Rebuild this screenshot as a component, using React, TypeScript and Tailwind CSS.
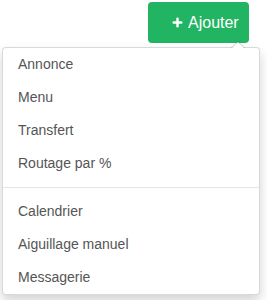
import { Plus } from "lucide-react"

const groupA = ["Annonce", "Menu", "Transfert", "Routage par %"]
const groupB = ["Calendrier", "Aiguillage manuel", "Messagerie"]

function Item({ label }: { label: string }) {
  return (
    <a
      href="#"
      className="block h-[33px] pl-[15px] pt-[6px] text-[14px] leading-[20px] text-[#555] hover:bg-gray-100"
    >
      {label}
    </a>
  )
}

export default function App() {
  return (
    <div className="relative h-[300px] w-[267px] bg-white font-['Liberation_Sans',Arial,sans-serif]">
      <div className="flex justify-end pt-[2px] pr-[18px]">
        <button className="flex h-[41px] w-[101px] items-center gap-[4px] rounded-[4px] bg-[#20b463] pl-[23px] text-[16px] text-white">
          <Plus className="h-[13px] w-[13px]" strokeWidth={4.5} />
          <span>Ajouter</span>
        </button>
      </div>

      {/* Menu déroulant */}
      <div className="absolute left-[2px] top-[47px] w-[258px] rounded-[4px] border border-black/15 bg-white shadow-[0_6px_12px_rgba(0,0,0,0.175)]">
        {/* petite flèche */}
        <div className="absolute -top-[7px] right-[14px] h-0 w-0 border-x-[7px] border-b-[7px] border-x-transparent border-b-black/20" />
        <div className="absolute -top-[6px] right-[15px] h-0 w-0 border-x-[6px] border-b-[6px] border-x-transparent border-b-white" />

        {groupA.map((label) => (
          <Item key={label} label={label} />
        ))}
        <div className="my-[7px] h-px bg-[#e5e5e5]" />
        {groupB.map((label) => (
          <Item key={label} label={label} />
        ))}
      </div>
    </div>
  )
}
